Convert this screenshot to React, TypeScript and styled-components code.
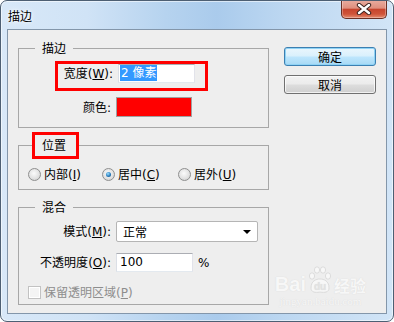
import React from "react";
import styled, { createGlobalStyle } from "styled-components";

const GlobalStyle = createGlobalStyle`
  html, body { margin: 0; padding: 0; }
  body {
    background: #ffffff;
    font-family: "Noto Sans CJK SC", sans-serif;
    font-size: 12px;
    line-height: 16px;
    color: #000;
  }
`;

const Window = styled.div`
  width: 394px;
  height: 322px;
  box-sizing: border-box;
  display: flex;
  flex-direction: column;
  border: 1px solid #4d5f73;
  border-radius: 7px;
  overflow: hidden;
  background: linear-gradient(90deg, #d8e8f8 0%, #d0e3f6 22%, #b6d3ef 42%, #aacbec 55%, #bcd7f1 72%, #d2e5f7 100%);
  box-shadow: inset 0 0 0 1px rgba(255, 255, 255, 0.55);
`;

const TitleBar = styled.div`
  height: 28px;
  display: flex;
  align-items: flex-start;
`;

const Title = styled.span`
  padding: 7px 0 0 7px;
  font-size: 12px;
  text-shadow: 0 0 6px #ffffff, 0 0 3px #ffffff;
`;

const CloseButton = styled.div`
  width: 46px;
  height: 19px;
  margin: -1px 6px 0 auto;
  box-sizing: border-box;
  border: 1px solid #6a3025;
  border-top: none;
  border-radius: 0 0 5px 5px;
  background: linear-gradient(180deg, #e9ada0 0%, #df8f7e 45%, #c7452e 52%, #cf5439 78%, #e48c70 100%);
  box-shadow: inset 0 0 0 1px rgba(255, 255, 255, 0.3);
  display: flex;
  align-items: center;
  justify-content: center;
`;

const Client = styled.div`
  flex: 1;
  margin: 0 6px 7px 6px;
  border: 1px solid #8396aa;
  background: #eeeeee;
  display: flex;
  padding-left: 10px;
  position: relative;
`;

const LeftCol = styled.div`
  width: 251px;
  padding-top: 10px;
  display: flex;
  flex-direction: column;
`;

const RightCol = styled.div`
  margin-left: 15px;
  padding-top: 17px;
  display: flex;
  flex-direction: column;
  gap: 9px;
`;

const Group = styled.fieldset<{ $mt: number; $pb: number }>`
  margin: ${(p) => p.$mt}px 0 0 0;
  padding: 0 0 ${(p) => p.$pb}px 0;
  border: 1px solid #a7a7a7;
  min-width: 0;
`;

const Legend = styled.legend<{ $marked?: boolean }>`
  margin-left: ${(p) => (p.$marked ? 13 : 16)}px;
  padding: ${(p) => (p.$marked ? "2px 10px 3px 7px" : "0 7px")};
  border: ${(p) => (p.$marked ? "3px solid #ff0000" : "none")};
  line-height: 16px;
`;

const Marked = styled.div`
  width: fit-content;
  margin: 5px 0 0 36px;
  border: 3px solid #ff0000;
  padding: 0 10px 5px 2px;
`;

const Row = styled.div<{ $mt?: number }>`
  display: flex;
  align-items: center;
  gap: 5px;
  margin-top: ${(p) => p.$mt ?? 0}px;
`;

const Label = styled.span<{ $w: number }>`
  width: ${(p) => p.$w}px;
  text-align: right;
  white-space: nowrap;
`;

/* latin part of a label: "(W):" – kept out of the CJK font so the parens stay narrow */
const Key = styled.span`
  font-family: "DejaVu Sans", sans-serif;
`;

const TextBox = styled.div<{ $w: number; $pad?: number }>`
  width: ${(p) => p.$w}px;
  height: 19px;
  box-sizing: border-box;
  border: 1px solid;
  border-color: #abadb3 #e2e3ea #e3e9ef #dbdfe6;
  background: #ffffff;
  padding-left: ${(p) => p.$pad ?? 1}px;
  line-height: 17px;
  white-space: nowrap;
  font-family: "DejaVu Sans", "Noto Sans CJK SC", sans-serif;
`;

const Selected = styled.span`
  background: #3399ff;
  color: #ffffff;
  padding: 1px 1px;
`;

const Swatch = styled.div`
  width: 76px;
  height: 20px;
  box-sizing: border-box;
  border: 1px solid #a0a0a0;
  background: #ff0000;
`;

const Select = styled.div`
  width: 142px;
  height: 21px;
  box-sizing: border-box;
  border: 1px solid #b5b5b5;
  border-radius: 2px;
  background: #ffffff;
  display: flex;
  align-items: center;
  justify-content: space-between;
  padding: 0 6px 0 6px;
`;

const Arrow = styled.span`
  width: 0;
  height: 0;
  border-left: 4px solid transparent;
  border-right: 4px solid transparent;
  border-top: 4px solid #000;
`;

const OptionRow = styled.div<{ $mt: number }>`
  display: flex;
  align-items: center;
  margin-top: ${(p) => p.$mt}px;
  padding-left: 9px;
  height: 16px;
`;

const Option = styled.label<{ $w?: number; $disabled?: boolean }>`
  display: flex;
  align-items: center;
  gap: 3px;
  width: ${(p) => (p.$w ? `${p.$w}px` : "auto")};
  color: ${(p) => (p.$disabled ? "#8d8d8d" : "#000")};
  white-space: nowrap;
`;

const Radio = styled.span`
  width: 13px;
  height: 13px;
  box-sizing: border-box;
  border-radius: 50%;
  border: 1px solid #8e8f8f;
  background: radial-gradient(circle at 45% 40%, #fbfbfb 0%, #e2e2e2 55%, #c9c9c9 100%);
  display: inline-flex;
  align-items: center;
  justify-content: center;
`;

const Dot = styled.span`
  width: 5px;
  height: 5px;
  border-radius: 50%;
  background: radial-gradient(circle at 40% 35%, #9fe0ff 0%, #2a7fc0 55%, #0b3e6b 100%);
`;

const Check = styled.span`
  width: 13px;
  height: 13px;
  box-sizing: border-box;
  border: 1px solid #c2c2c2;
  background: #f4f4f4;
  box-shadow: inset 0 0 0 1px #ffffff;
`;

const Button = styled.div<{ $default?: boolean }>`
  width: 92px;
  height: 19px;
  box-sizing: border-box;
  border: 1px solid ${(p) => (p.$default ? "#3c7fb1" : "#707070")};
  border-radius: 3px;
  background: ${(p) =>
    p.$default
      ? "linear-gradient(180deg, #eaf6fd 0%, #d9f0fc 48%, #bee6fd 52%, #a7d9f5 100%)"
      : "linear-gradient(180deg, #f2f2f2 0%, #ebebeb 48%, #dddddd 52%, #cfcfcf 100%)"};
  box-shadow: inset 0 0 0 1px ${(p) => (p.$default ? "#8fd3f5" : "rgba(255,255,255,0.7)")};
  display: flex;
  align-items: center;
  justify-content: center;
  line-height: 16px;
`;

const Watermark = styled.div`
  position: absolute;
  right: 20px;
  bottom: 6px;
  display: flex;
  flex-direction: column;
  align-items: center;
  color: #f7f7f7;
  text-shadow: 0 0 1px rgba(170, 170, 170, 0.35);
  pointer-events: none;
`;

const MarkTop = styled.div`
  display: flex;
  align-items: flex-end;
  gap: 1px;
`;

const MarkBai = styled.span`
  font-family: "Liberation Sans", sans-serif;
  font-weight: bold;
  font-size: 20px;
  line-height: 20px;
`;

const MarkJy = styled.span`
  font-weight: bold;
  font-size: 16px;
  line-height: 18px;
`;

const MarkUrl = styled.span`
  font-family: "Liberation Serif", serif;
  font-size: 11px;
  line-height: 12px;
  margin-top: 1px;
`;

const CloseGlyph = () => (
  <svg width="16" height="12" viewBox="0 0 16 12">
    <path d="M3 2 L13 10 M13 2 L3 10" stroke="#3d2420" strokeWidth="4.4" strokeLinecap="round" />
    <path d="M3 2 L13 10 M13 2 L3 10" stroke="#ffffff" strokeWidth="2.4" strokeLinecap="round" />
  </svg>
);

const Paw = () => (
  <svg width="26" height="28" viewBox="0 0 26 28">
    <g fill="#f7f7f7" stroke="#d6d6d6" strokeWidth="0.8">
      <ellipse cx="5" cy="10" rx="2.6" ry="3.2" />
      <ellipse cx="10" cy="4" rx="2.6" ry="3.2" />
      <ellipse cx="16" cy="4" rx="2.6" ry="3.2" />
      <ellipse cx="21" cy="10" rx="2.6" ry="3.2" />
      <path d="M4 22 C4 15 9 13 13 13 C17 13 22 15 22 22 C22 26 18 27 13 26 C8 27 4 26 4 22 Z" />
    </g>
    <text x="13" y="24" textAnchor="middle" fontFamily="Liberation Sans, sans-serif" fontWeight="bold" fontSize="10" fill="#e2e2e2">du</text>
  </svg>
);

const App = () => {
  return (
    <>
      <GlobalStyle />
      <Window>
        <TitleBar>
          <Title>描边</Title>
          <CloseButton>
            <CloseGlyph />
          </CloseButton>
        </TitleBar>
        <Client>
          <LeftCol>
            <Group $mt={0} $pb={10}>
              <Legend>描边</Legend>
              <Marked>
                <Row>
                  <Label $w={53}>
                    宽度<Key>(<u>W</u>):</Key>
                  </Label>
                  <TextBox $w={77}>
                    <Selected>2 像素</Selected>
                  </TextBox>
                </Row>
              </Marked>
              <Row $mt={6}>
                <Label $w={92}>
                  颜色<Key>:</Key>
                </Label>
                <Swatch />
              </Row>
            </Group>

            <Group $mt={4} $pb={7}>
              <Legend $marked>位置</Legend>
              <OptionRow $mt={7}>
                <Option $w={74}>
                  <Radio />
                  <span>
                    内部<Key>(<u>I</u>)</Key>
                  </span>
                </Option>
                <Option $w={76}>
                  <Radio>
                    <Dot />
                  </Radio>
                  <span>
                    居中<Key>(<u>C</u>)</Key>
                  </span>
                </Option>
                <Option>
                  <Radio />
                  <span>
                    居外<Key>(<u>U</u>)</Key>
                  </span>
                </Option>
              </OptionRow>
            </Group>

            <Group $mt={9} $pb={4}>
              <Legend>混合</Legend>
              <Row $mt={6}>
                <Label $w={92}>
                  模式<Key>(<u>M</u>):</Key>
                </Label>
                <Select>
                  <span>正常</span>
                  <Arrow />
                </Select>
              </Row>
              <Row $mt={11}>
                <Label $w={92}>
                  不透明度<Key>(<u>O</u>):</Key>
                </Label>
                <TextBox $w={77} $pad={3}>100</TextBox>
                <Key>%</Key>
              </Row>
              <OptionRow $mt={12}>
                <Option $disabled>
                  <Check />
                  <span>
                    保留透明区域<Key>(<u>P</u>)</Key>
                  </span>
                </Option>
              </OptionRow>
            </Group>
          </LeftCol>

          <RightCol>
            <Button $default>确定</Button>
            <Button>取消</Button>
          </RightCol>

          <Watermark>
            <MarkTop>
              <MarkBai>Bai</MarkBai>
              <Paw />
              <MarkJy>经验</MarkJy>
            </MarkTop>
            <MarkUrl>jingyan.baidu.com</MarkUrl>
          </Watermark>
        </Client>
      </Window>
    </>
  );
};

export default App;
